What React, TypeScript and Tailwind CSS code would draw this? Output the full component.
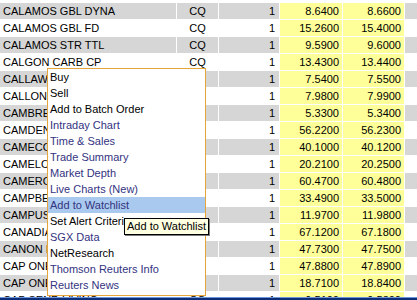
import React from "react";

type Quote = { name: string; bid: string; ask: string };

const quotes: Quote[] = [
  { name: "CALAMOS GBL DYNA", bid: "8.6400", ask: "8.6600" },
  { name: "CALAMOS GBL FD", bid: "15.2600", ask: "15.4000" },
  { name: "CALAMOS STR TTL", bid: "9.5900", ask: "9.6000" },
  { name: "CALGON CARB CP", bid: "13.4300", ask: "13.4400" },
  { name: "CALLAWAY GOLF", bid: "7.5400", ask: "7.5500" },
  { name: "CALLON PETROLEUM", bid: "7.9800", ask: "7.9900" },
  { name: "CAMBREX CORP", bid: "5.3300", ask: "5.3400" },
  { name: "CAMDEN PROP TR", bid: "56.2200", ask: "56.2300" },
  { name: "CAMECO CORP", bid: "40.1000", ask: "40.1200" },
  { name: "CAMELOT INFO", bid: "20.2100", ask: "20.2500" },
  { name: "CAMERON INTL", bid: "60.4700", ask: "60.4800" },
  { name: "CAMPBELL SOUP", bid: "33.4900", ask: "33.5000" },
  { name: "CAMPUS CREST", bid: "11.9700", ask: "11.9800" },
  { name: "CANADIAN NATL", bid: "67.1200", ask: "67.1800" },
  { name: "CANON INC", bid: "47.7300", ask: "47.7500" },
  { name: "CAP ONE FINL", bid: "47.8800", ask: "47.8900" },
  { name: "CAP ONE FINL WT", bid: "18.7100", ask: "18.8400" },
  { name: "CAP SENR LIVING", bid: "9.5100", ask: "9.5300" },
];

const menu: { label: string; link?: boolean; active?: boolean }[] = [
  { label: "Buy" },
  { label: "Sell" },
  { label: "Add to Batch Order" },
  { label: "Intraday Chart", link: true },
  { label: "Time & Sales", link: true },
  { label: "Trade Summary", link: true },
  { label: "Market Depth", link: true },
  { label: "Live Charts (New)", link: true },
  { label: "Add to Watchlist", link: true, active: true },
  { label: "Set Alert Criteria" },
  { label: "SGX Data", link: true },
  { label: "NetResearch" },
  { label: "Thomson Reuters Info", link: true },
  { label: "Reuters News", link: true },
];

function Row({ q, i }: { q: Quote; i: number }) {
  const bg = i % 2 === 0 ? "bg-[#d6d6d6]" : "bg-white";
  const h = i === 0 ? "h-[19px] pt-[3px]" : "h-4";
  return (
    <div className={`flex gap-px shrink-0 ${h}`}>
      <div className={`w-[176px] pl-[3px] leading-4 truncate ${bg}`}>{q.name}</div>
      <div className={`w-[41px] text-center leading-4 ${bg}`}>CQ</div>
      <div className={`w-[60px] text-right pr-[4px] leading-4 ${bg}`}>1</div>
      <div className="w-[62px] text-right pr-[3px] leading-4 bg-[#ffff99]">{q.bid}</div>
      <div className="w-[61px] text-right pr-[3px] leading-4 bg-[#ffff99]">{q.ask}</div>
      <div className={`flex-1 ${bg}`} />
    </div>
  );
}

export default function App() {
  return (
    <div className="relative w-[417px] h-[300px] overflow-hidden bg-white flex flex-col text-[11px] text-black font-['Liberation_Sans',Arial,sans-serif]">
      <div className="flex-1 overflow-hidden flex flex-col gap-px">
        {quotes.map((q, i) => (
          <Row key={q.name} q={q} i={i} />
        ))}
      </div>
      {/* taskbar edge */}
      <div className="h-[3px] shrink-0 border-t border-[#6d95d8] bg-[#0c2d78]" />

      {/* context menu */}
      <div className="absolute left-[47px] top-[68px] w-[159px] bg-white border border-[#e5a53a] pb-[2px]">
        {menu.map((m) => (
          <div
            key={m.label}
            className={`h-4 leading-4 pl-[2px] whitespace-nowrap ${m.active ? "bg-[#a9c9ee]" : ""} ${
              m.link ? "text-[#33337f]" : "text-black"
            }`}
          >
            {m.label}
          </div>
        ))}
      </div>

      {/* tooltip */}
      <div className="absolute left-[124px] top-[218px] h-[17px] px-[2px] leading-[15px] whitespace-nowrap bg-[#ffffe1] border border-black shadow-[1px_1px_0_#7a7a7a]">
        Add to Watchlist
      </div>
    </div>
  );
}
